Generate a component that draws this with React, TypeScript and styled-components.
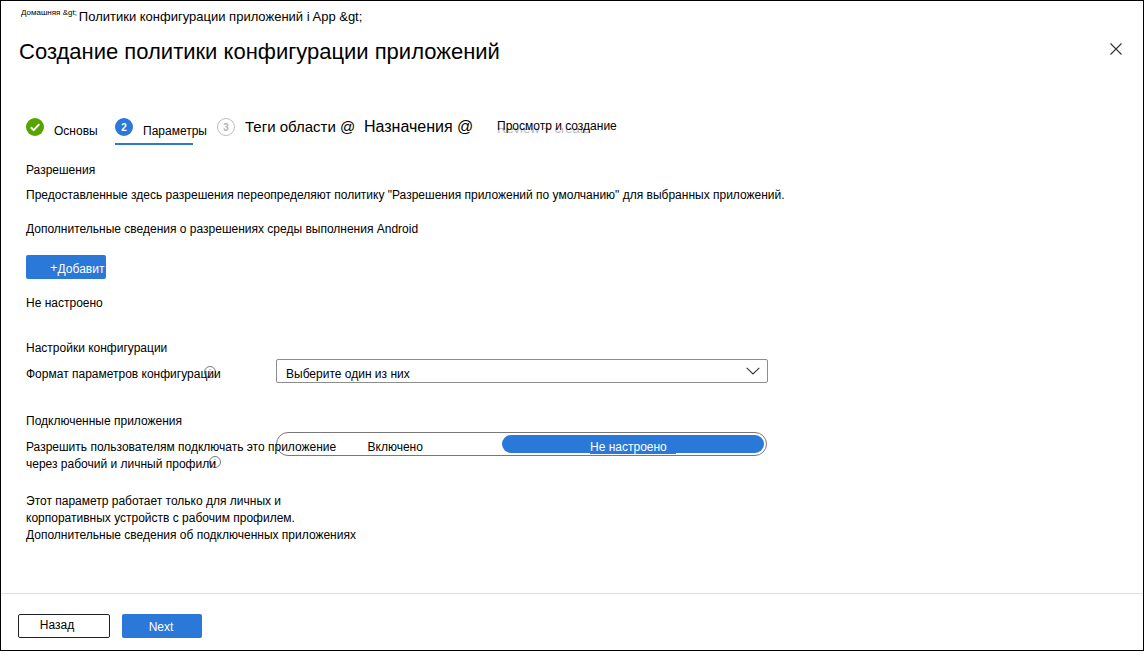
import React from "react";
import styled, { createGlobalStyle, css } from "styled-components";

const blue = "#2a78d8";

const GlobalStyle = createGlobalStyle`
  *, *::before, *::after { box-sizing: border-box; }
  body {
    margin: 0;
    background: #fff;
    color: #000;
    font: 12px/17px "Liberation Sans", Arial, sans-serif;
  }
  button, select, input { font: inherit; color: inherit; }
`;

const Page = styled.div`
  display: flex;
  flex-direction: column;
  min-height: 100vh;
  border: 1px solid #000;
`;

const Header = styled.header`
  display: flex;
  justify-content: space-between;
  align-items: flex-end;
  padding: 6px 20px 0 18px;
`;

const Breadcrumb = styled.nav`
  display: flex;
  align-items: flex-start;
  gap: 2px;
  padding-left: 2px;
`;

const Crumb = styled.a<{ $small?: boolean }>`
  color: inherit;
  text-decoration: none;
  font-size: ${(p) => (p.$small ? 8 : 13)}px;
  line-height: ${(p) => (p.$small ? 12 : 20)}px;
`;

const Title = styled.h1`
  margin: 10px 0 0;
  font-size: 22px;
  font-weight: 400;
  line-height: 30px;
`;

const CloseButton = styled.button`
  display: flex;
  margin-bottom: 11px;
  padding: 0;
  border: 0;
  background: none;
`;

const Steps = styled.ol`
  display: flex;
  gap: 24px;
  margin: 51px 0 0;
  padding: 0 25px;
  list-style: none;
`;

const Step = styled.li<{ $width?: number; $current?: boolean }>`
  flex: none;
  width: ${(p) => (p.$width ? `${p.$width}px` : "auto")};
  height: 27px;
  border-bottom: 2px solid ${(p) => (p.$current ? blue : "transparent")};
`;

const StepButton = styled.button`
  position: relative;
  display: flex;
  align-items: flex-start;
  gap: 10px;
  padding: 0;
  border: 0;
  background: none;
  white-space: nowrap;
`;

const StepMark = styled.span<{ $state: "done" | "current" | "todo" }>`
  display: flex;
  align-items: center;
  justify-content: center;
  width: 18px;
  height: 18px;
  border-radius: 50%;
  font-size: 10px;
  font-weight: 700;
  ${(p) =>
    p.$state === "todo"
      ? css`
          border: 1px solid #bdbdbd;
          color: #b4b4b4;
        `
      : css`
          background: ${p.$state === "done" ? "#57a300" : blue};
          color: #fff;
        `}
`;

const StepLabel = styled.span<{ $size?: number; $low?: boolean }>`
  position: relative;
  padding-top: ${(p) => (p.$low ? 5 : 0)}px;
  font-size: ${(p) => p.$size ?? 12}px;
`;

const StepGhost = styled.span`
  position: absolute;
  top: 10px;
  left: 0;
  display: flex;
  align-items: flex-end;
  height: 6px;
  overflow: hidden;
  color: #b8b8b8;
  font-size: 13px;
  line-height: 11px;
`;

const Main = styled.main`
  flex: 1;
  padding: 17px 25px 48px;
`;

const Paragraph = styled.p<{ $gap?: number }>`
  margin: 0 0 ${(p) => p.$gap ?? 0}px;
`;

const Heading = styled.h2<{ $gap: number }>`
  margin: 0 0 ${(p) => p.$gap}px;
  font-size: 12px;
  font-weight: 400;
`;

const AddButton = styled.button`
  display: flex;
  align-items: flex-start;
  width: 80px;
  height: 24px;
  margin: 17px 0 16px;
  padding: 6px 0 0 24px;
  overflow: hidden;
  border: 0;
  border-radius: 2px;
  background: ${blue};
  color: #fff;
  white-space: nowrap;
`;

const Plus = styled.span`
  font-size: 13px;
  line-height: 13px;
`;

const FormRow = styled.div<{ $gap: number }>`
  display: grid;
  grid-template-columns: 250px minmax(0, 492px);
  align-items: start;
  margin-bottom: ${(p) => p.$gap}px;
`;

const RowLabel = styled.div`
  position: relative;
  z-index: 1;
  padding-top: 7px;
  white-space: nowrap;
  pointer-events: none;
`;

const InfoMark = styled.svg<{ $x: number; $y: number }>`
  position: absolute;
  left: ${(p) => p.$x}px;
  top: ${(p) => p.$y}px;
  z-index: -1;
`;

const SelectBox = styled.div`
  position: relative;
`;

const Select = styled.select`
  display: block;
  width: 100%;
  height: 24px;
  padding: 6px 30px 0 9px;
  border: 1px solid #8f8d8b;
  border-radius: 2px;
  background: #fff;
  appearance: none;
`;

const Chevron = styled.svg`
  position: absolute;
  top: 8px;
  right: 8px;
  pointer-events: none;
`;

const Toggle = styled.div`
  display: grid;
  grid-template-columns: 223px minmax(0, 1fr);
  height: 24px;
  margin-right: 1px;
  padding: 2px;
  border: 1px solid #7a7876;
  border-radius: 12px;
`;

const Option = styled.label`
  display: flex;
  justify-content: center;
  height: 18px;
  padding-top: 4px;
  border-radius: 9px;

  &:has(input:checked) {
    background: ${blue};
    color: #fff;
  }
  input {
    appearance: none;
    width: 0;
    height: 0;
    margin: 0;
  }
`;

const OptionText = styled.span<{ $width: number }>`
  width: ${(p) => p.$width}px;
  height: 15px;

  input:checked + & {
    background: ${blue};
  }
`;

const Footer = styled.footer`
  display: flex;
  gap: 12px;
  padding: 20px 17px 12px;
  border-top: 1px solid #dedede;
`;

const BackButton = styled.button`
  width: 92px;
  height: 24px;
  padding: 0 16px 2px 2px;
  border: 1px solid #222;
  border-radius: 2px;
  background: #fff;
`;

const NextButton = styled.button`
  width: 80px;
  height: 24px;
  padding: 2px 2px 0 0;
  border: 0;
  border-radius: 2px;
  background: ${blue};
  color: #fff;
`;

function Info({ x, y }: { x: number; y: number }) {
  return (
    <InfoMark $x={x} $y={y} width="12" height="12" viewBox="0 0 12 12" aria-hidden="true">
      <circle cx="6" cy="6" r="5.5" fill="none" stroke="#6a6a6a" strokeWidth="0.9" />
      <path d="M6 5v4M6 3v1" stroke="#8a8a8a" strokeWidth="1" />
    </InfoMark>
  );
}

export default function App() {
  return (
    <>
      <GlobalStyle />
      <Page>
        <Header>
          <div>
            <Breadcrumb>
              <Crumb href="#home" $small>Домашняя &amp;gt;</Crumb>
              <Crumb href="#policies">Политики конфигурации приложений i App &amp;gt;</Crumb>
            </Breadcrumb>
            <Title>Создание политики конфигурации приложений</Title>
          </div>
          <CloseButton type="button" aria-label="Закрыть">
            <svg width="14" height="14" viewBox="0 0 14 14" aria-hidden="true">
              <path d="M1.5 1.5l11 11M12.5 1.5l-11 11" stroke="#333" strokeWidth="1.1" />
            </svg>
          </CloseButton>
        </Header>

        <Steps>
          <Step $width={65}>
            <StepButton type="button">
              <StepMark $state="done">
                <svg width="18" height="18" viewBox="0 0 18 18" aria-hidden="true">
                  <path d="M4.8 9.2l2.9 2.9 5.6-6" fill="none" stroke="#fff" strokeWidth="2" />
                </svg>
              </StepMark>
              <StepLabel $low>Основы</StepLabel>
            </StepButton>
          </Step>
          <Step $width={78} $current>
            <StepButton type="button" aria-current="step">
              <StepMark $state="current">2</StepMark>
              <StepLabel $low>Параметры</StepLabel>
            </StepButton>
          </Step>
          <Step $width={123}>
            <StepButton type="button">
              <StepMark $state="todo">3</StepMark>
              <StepLabel $size={15}>Теги области @</StepLabel>
            </StepButton>
          </Step>
          <Step $width={109}>
            <StepButton type="button">
              <StepLabel $size={16}>Назначения @</StepLabel>
            </StepButton>
          </Step>
          <Step>
            <StepButton type="button">
              <StepGhost aria-hidden="true">Review + create</StepGhost>
              <StepLabel>Просмотр и создание</StepLabel>
            </StepButton>
          </Step>
        </Steps>

        <Main>
          <Heading $gap={8}>Разрешения</Heading>
          <Paragraph $gap={17}>
            Предоставленные здесь разрешения переопределяют политику "Разрешения приложений по умолчанию" для выбранных
            приложений.
          </Paragraph>
          <Paragraph>Дополнительные сведения о разрешениях среды выполнения Android</Paragraph>
          <AddButton type="button">
            <Plus>+</Plus>
            <span>Добавит</span>
          </AddButton>
          <Paragraph $gap={28}>Не настроено</Paragraph>

          <Heading $gap={2}>Настройки конфигурации</Heading>
          <FormRow $gap={30}>
            <RowLabel>
              <label htmlFor="format">Формат параметров конфигурации</label>
              <Info x={178} y={7} />
            </RowLabel>
            <SelectBox>
              <Select id="format" defaultValue="">
                <option value="">Выберите один из них</option>
              </Select>
              <Chevron width="14" height="8" viewBox="0 0 14 8" aria-hidden="true">
                <path d="M0.7 0.8L7 7l6.3-6.2" fill="none" stroke="#333" strokeWidth="1.1" />
              </Chevron>
            </SelectBox>
          </FormRow>

          <Heading $gap={2}>Подключенные приложения</Heading>
          <FormRow $gap={20}>
            <RowLabel id="connected">
              Разрешить пользователям подключать это приложение
              <br />
              через рабочий и личный профили
              <Info x={183} y={24} />
            </RowLabel>
            <Toggle role="radiogroup" aria-labelledby="connected">
              <Option>
                <input type="radio" name="connected" />
                <OptionText $width={46}>Включено</OptionText>
              </Option>
              <Option>
                <input type="radio" name="connected" defaultChecked />
                <OptionText $width={86}>Не настроено</OptionText>
              </Option>
            </Toggle>
          </FormRow>

          <Paragraph>
            Этот параметр работает только для личных и<br />
            корпоративных устройств с рабочим профилем.
          </Paragraph>
          <Paragraph>Дополнительные сведения об подключенных приложениях</Paragraph>
        </Main>

        <Footer>
          <BackButton type="button">Назад</BackButton>
          <NextButton type="button">Next</NextButton>
        </Footer>
      </Page>
    </>
  );
}
